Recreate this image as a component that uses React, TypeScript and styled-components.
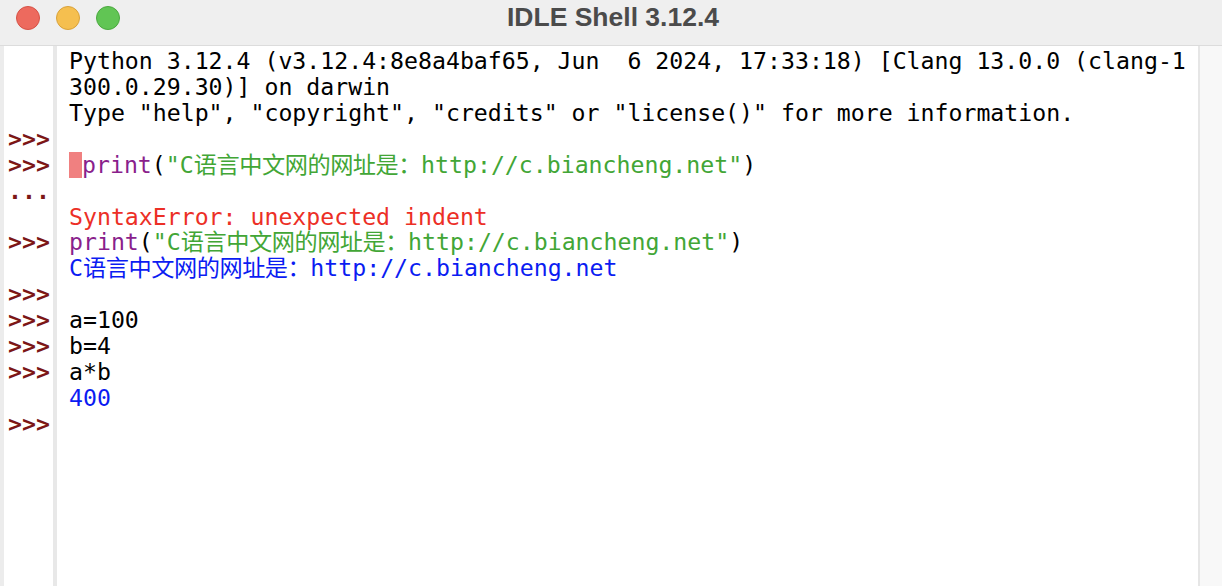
import React from 'react'
import { styled, createGlobalStyle } from 'styled-components'

type Tone = 'plain' | 'builtin' | 'string' | 'error' | 'output'

type Seg = {
  text: string;
  tone?: Tone;
  han?: boolean;
}

type Line = {
  prompt?: string;
  cursor?: boolean;
  segs: Seg[];
}

const tones: Record<Tone, string> = {
  plain: '#000000',
  builtin: '#8a1f8c',
  string: '#42a636',
  error: '#ec2f26',
  output: '#0b1cf2',
}

const printLine: Seg[] = [
  { text: 'print', tone: 'builtin' },
  { text: '(' },
  { text: '"C', tone: 'string' },
  { text: '语言中文网的网址是：', tone: 'string', han: true },
  { text: 'http://c.biancheng.net"', tone: 'string' },
  { text: ')' },
]

const lines: Line[] = [
  { segs: [{ text: 'Python 3.12.4 (v3.12.4:8e8a4baf65, Jun  6 2024, 17:33:18) [Clang 13.0.0 (clang-1' }] },
  { segs: [{ text: '300.0.29.30)] on darwin' }] },
  { segs: [{ text: 'Type "help", "copyright", "credits" or "license()" for more information.' }] },
  { prompt: '>>>', segs: [] },
  { prompt: '>>>', cursor: true, segs: printLine },
  { prompt: '...', segs: [] },
  { segs: [{ text: 'SyntaxError: unexpected indent', tone: 'error' }] },
  { prompt: '>>>', segs: printLine },
  {
    segs: [
      { text: 'C', tone: 'output' },
      { text: '语言中文网的网址是：', tone: 'output', han: true },
      { text: 'http://c.biancheng.net', tone: 'output' },
    ],
  },
  { prompt: '>>>', segs: [] },
  { prompt: '>>>', segs: [{ text: 'a=100' }] },
  { prompt: '>>>', segs: [{ text: 'b=4' }] },
  { prompt: '>>>', segs: [{ text: 'a*b' }] },
  { segs: [{ text: '400', tone: 'output' }] },
  { prompt: '>>>', segs: [] },
]

export default function App() {
  return (
    <>
      <GlobalStyle />
      <Window>
        <TitleBar>
          <Lights>
            <Light $fill="#ed6a5e" $edge="#d65246" />
            <Light $fill="#f5bf4f" $edge="#d9a23a" />
            <Light $fill="#61c554" $edge="#4ba93f" />
          </Lights>
          <Title>IDLE Shell 3.12.4</Title>
          <span />
        </TitleBar>

        <Body>
          <Sidebar>
            {lines.map((line, i) => (
              <PromptRow key={i}>{line.prompt ?? ''}</PromptRow>
            ))}
          </Sidebar>

          <Editor>
            {lines.map((line, i) => (
              <CodeRow key={i}>
                {line.cursor && <Cursor />}
                {line.segs.map((seg, j) => (
                  <Seg key={j} $tone={seg.tone ?? 'plain'} $han={!!seg.han}>
                    {seg.text}
                  </Seg>
                ))}
              </CodeRow>
            ))}
          </Editor>

          <ScrollGutter />
        </Body>
      </Window>
    </>
  )
}

const GlobalStyle = createGlobalStyle`
  html, body {
    margin: 0;
    padding: 0;
    background: #ffffff;
    overflow: hidden;
  }
`

const mono = `"DejaVu Sans Mono", "Noto Sans CJK SC", monospace`

const Window = styled.div`
  display: flex;
  flex-direction: column;
  width: 1222px;
  height: 586px;
  background: #ffffff;
`

const TitleBar = styled.header`
  display: grid;
  grid-template-columns: 1fr auto 1fr;
  align-items: center;
  height: 45px;
  flex-shrink: 0;
  background: #efefef;
  border-bottom: 1px solid #dcdcdc;
`

const Lights = styled.div`
  display: flex;
  gap: 16px;
  padding-left: 16px;
  padding-bottom: 10px;
`

const Light = styled.span<{ $fill: string; $edge: string }>`
  width: 24px;
  height: 24px;
  border-radius: 50%;
  box-sizing: border-box;
  background: ${p => p.$fill};
  border: 1px solid ${p => p.$edge};
`

const Title = styled.h1`
  margin: 0 0 10px 4px;
  font-family: "Liberation Sans", Arial, sans-serif;
  font-weight: 700;
  font-size: 26.5px;
  color: #4b4b4b;
`

const Body = styled.div`
  display: flex;
  flex: 1;
  min-height: 0;
`

const Sidebar = styled.div`
  width: 45px;
  padding: 2px 0 0 4px;
  border-left: 4px solid #ececec;
  border-right: 4px solid #e8e8e8;
  font-family: ${mono};
  font-size: 23.2px;
  font-weight: 700;
  color: #7c1616;
`

const PromptRow = styled.div`
  height: 25.93px;
  line-height: 25.93px;
  white-space: pre;
`

const Editor = styled.div`
  flex: 1;
  padding: 2px 0 0 12px;
  overflow: hidden;
  font-family: ${mono};
  font-size: 23.2px;
`

const CodeRow = styled.div`
  display: flex;
  height: 25.93px;
  line-height: 25.93px;
  white-space: pre;
`

const Cursor = styled.span`
  width: 13px;
  height: 26px;
  background: #f08080;
`

const Seg = styled.span<{ $tone: Tone; $han: boolean }>`
  color: ${p => tones[p.$tone]};
  letter-spacing: ${p => (p.$han ? '-0.45px' : '0')};
`

const ScrollGutter = styled.div`
  width: 22px;
  background: #f8f8f8;
  border-left: 2px solid #e6e6e6;
`
